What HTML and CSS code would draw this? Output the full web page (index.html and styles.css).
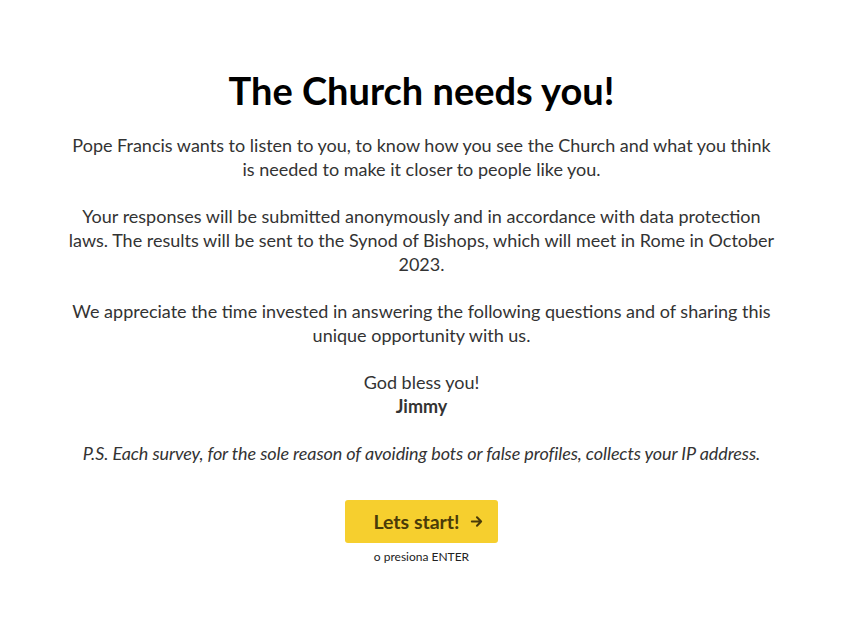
FILE: index.html
```html
<!DOCTYPE html>
<html lang="en">
<head>
    <meta charset="UTF-8">
    <meta name="viewport" content="width=device-width, initial-scale=1.0">
    <title>The Church needs you!</title>
    <link rel="stylesheet" href="styles.css">
</head>
<body>
    <div class="welcome">
        <h1 class="title">The Church needs you!</h1>
        <div class="intro">
            <p>Pope Francis wants to listen to you, to know how you see the Church and what you think is needed to make it closer to people like you.</p>
            <p>Your responses will be submitted anonymously and in accordance with data protection laws. The results will be sent to the Synod of Bishops, which will meet in Rome in October 2023.</p>
            <p>We appreciate the time invested in answering the following questions and of sharing this unique opportunity with us.</p>
            <p>God bless you!<br><strong>Jimmy</strong></p>
            <p><em>P.S. Each survey, for the sole reason of avoiding bots or false profiles, collects your IP address.</em></p>
        </div>
        <div class="start">
            <button class="start-btn">Lets start!
                <svg width="13" height="13" viewBox="0 0 14 14" fill="none" stroke="currentColor" stroke-width="2.2" stroke-linecap="round" stroke-linejoin="round"><path d="M2 7h10M7.5 2.5 12 7l-4.5 4.5"/></svg>
            </button>
            <div class="hint">o presiona ENTER</div>
        </div>
    </div>
</body>
</html>
```

FILE: styles.css
```css
body {
    margin: 0;
    font-family: Lato, "Open Sans", sans-serif;
    background-color: #fff;
    color: #333;
}
.welcome {
    max-width: 708px;
    margin: 0 auto;
    padding: 67px 8px 40px;
    text-align: center;
}
.title {
    margin: 0 0 20px;
    font-size: 38px;
    line-height: 46px;
    font-weight: 700;
    color: #000;
}
.intro p {
    margin: 0 0 23px;
    font-size: 18px;
    line-height: 24px;
}
.intro em {
    letter-spacing: -0.1px;
}
.intro strong {
    font-weight: 700;
}
.start {
    margin-top: 35px;
    display: flex;
    flex-direction: column;
    align-items: center;
}
.start-btn {
    display: flex;
    align-items: center;
    gap: 10px;
    height: 43px;
    padding: 0 15px 0 28px;
    border: none;
    border-radius: 3px;
    background-color: #f6cf2e;
    color: #4a3b08;
    font-family: inherit;
    font-size: 19.5px;
    font-weight: 700;
    cursor: pointer;
}
.hint {
    margin-top: 6px;
    font-size: 12px;
    color: #222;
}
```
